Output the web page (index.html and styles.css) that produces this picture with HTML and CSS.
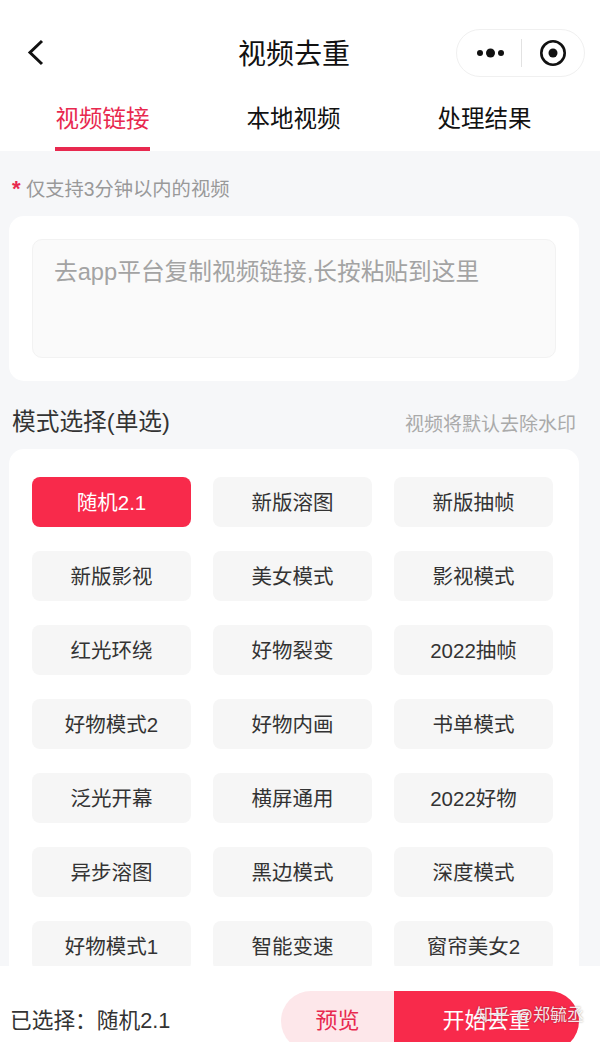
FILE: index.html
```html
<!DOCTYPE html>
<html lang="zh-CN">
<head>
    <meta charset="UTF-8">
    <meta name="viewport" content="width=device-width, initial-scale=1.0">
    <title>视频去重</title>
    <link rel="stylesheet" href="styles.css">
</head>
<body>
    <div class="page">
        <div class="top">
            <div class="navbar">
                <svg class="back" width="24" height="30" viewBox="0 0 24 30">
                    <path d="M18 3 L6 14.5 L18 26" fill="none" stroke="#111" stroke-width="3"/>
                </svg>
                <div class="nav-title">视频去重</div>
                <div class="capsule">
                    <svg width="27" height="12" viewBox="0 0 27 12">
                        <circle cx="3" cy="6" r="3" fill="#111"/>
                        <circle cx="13.5" cy="6" r="4.5" fill="#111"/>
                        <circle cx="24" cy="6" r="3" fill="#111"/>
                    </svg>
                    <div class="capsule-line"></div>
                    <svg width="28" height="28" viewBox="0 0 28 28">
                        <circle cx="14" cy="14" r="11.7" fill="none" stroke="#111" stroke-width="2.6"/>
                        <circle cx="14" cy="14" r="4.5" fill="#111"/>
                    </svg>
                </div>
            </div>
            <div class="tabs">
                <div class="tab active">视频链接</div>
                <div class="tab">本地视频</div>
                <div class="tab">处理结果</div>
            </div>
        </div>

        <div class="content">
            <div class="tip"><span class="star">*</span> 仅支持3分钟以内的视频</div>

            <div class="card link-card">
                <div class="link-box">去app平台复制视频链接,长按粘贴到这里</div>
            </div>

            <div class="section-head">
                <div class="section-title">模式选择(单选)</div>
                <div class="section-note">视频将默认去除水印</div>
            </div>

            <div class="card mode-card">
                <div class="mode selected">随机2.1</div>
                <div class="mode">新版溶图</div>
                <div class="mode">新版抽帧</div>
                <div class="mode">新版影视</div>
                <div class="mode">美女模式</div>
                <div class="mode">影视模式</div>
                <div class="mode">红光环绕</div>
                <div class="mode">好物裂变</div>
                <div class="mode">2022抽帧</div>
                <div class="mode">好物模式2</div>
                <div class="mode">好物内画</div>
                <div class="mode">书单模式</div>
                <div class="mode">泛光开幕</div>
                <div class="mode">横屏通用</div>
                <div class="mode">2022好物</div>
                <div class="mode">异步溶图</div>
                <div class="mode">黑边模式</div>
                <div class="mode">深度模式</div>
                <div class="mode">好物模式1</div>
                <div class="mode">智能变速</div>
                <div class="mode">窗帘美女2</div>
            </div>
        </div>

        <div class="footer">
            <div class="picked">已选择：随机2.1</div>
            <div class="actions">
                <div class="btn-preview">预览</div>
                <div class="btn-start">开始去重</div>
            </div>
        </div>

        <div class="watermark">知乎 @郑毓丞</div>
    </div>
</body>
</html>
```

FILE: styles.css
```css
* {
    box-sizing: border-box;
}
body {
    margin: 0;
    font-family: "Liberation Sans", "Noto Sans CJK SC", sans-serif;
    color: #222;
}
.page {
    position: relative;
    height: 1042px;
    overflow: hidden;
    background: #f6f7f9;
}
.top {
    height: 151px;
    background: white;
    padding-top: 32px;
}
.navbar {
    position: relative;
    height: 44px;
    padding: 0 12px 4px 0;
    display: flex;
    align-items: center;
    justify-content: center;
}
.back {
    position: absolute;
    left: 24px;
    top: 6px;
}
.nav-title {
    font-size: 28px;
    color: #111;
}
.capsule {
    position: absolute;
    left: 456px;
    top: -3px;
    width: 129px;
    height: 48px;
    border: 1px solid #f0f0f0;
    border-radius: 24px;
    display: flex;
    align-items: center;
    padding-left: 20px;
}
.capsule-line {
    width: 1px;
    height: 28px;
    background: #e2e2e2;
    margin: 0 17px;
}
.tabs {
    display: flex;
    justify-content: space-between;
    padding: 0 68px 0 55px;
    margin-top: 21px;
}
.tab {
    width: 95px;
    height: 54px;
    font-size: 23.5px;
    line-height: 44px;
    white-space: nowrap;
    color: #111;
    text-align: center;
}
.tab.active {
    color: #e8294f;
    border-bottom: 4px solid #e8294f;
}
.content {
    padding: 0 21px 0 9px;
}
.tip {
    height: 28px;
    margin-top: 25px;
    padding-left: 3px;
    font-size: 19.3px;
    line-height: 28px;
    color: #999;
}
.star {
    color: #e8294f;
    font-size: 22px;
    font-weight: bold;
    line-height: 20px;
}
.card {
    background: white;
    border-radius: 15px;
}
.link-card {
    margin-top: 12px;
    height: 165px;
    padding: 23px 23px 0;
}
.link-box {
    height: 119px;
    width: 524px;
    padding: 14px 21px;
    background: #fafafa;
    border: 1px solid #f2f2f2;
    border-radius: 10px;
    font-size: 23.7px;
    line-height: 36px;
    color: #a3a3a3;
}
.section-head {
    display: flex;
    justify-content: space-between;
    align-items: center;
    height: 68px;
    padding: 10px 3px 0;
}
.section-title {
    font-size: 23.7px;
    color: #333;
}
.section-note {
    font-size: 19px;
    color: #aaa;
    margin-top: 5px;
}
.mode-card {
    padding: 28px 27px 28px 23px;
    display: grid;
    grid-template-columns: repeat(3, 159px);
    gap: 24px 22px;
}
.mode {
    height: 50px;
    line-height: 51px;
    text-align: center;
    background: #f6f6f6;
    border-radius: 8px;
    font-size: 20.5px;
    color: #333;
    white-space: nowrap;
}
.mode.selected {
    background: #f82a4b;
    color: white;
}
.footer {
    position: absolute;
    left: 0;
    right: 0;
    bottom: 0;
    height: 76px;
    background: white;
    display: flex;
    justify-content: space-between;
    padding: 25px 21px 0 10px;
}
.picked {
    font-size: 21.7px;
    line-height: 60px;
    color: #333;
}
.actions {
    display: flex;
    height: 60px;
    font-size: 22px;
    line-height: 60px;
    text-align: center;
}
.btn-preview {
    width: 113px;
    background: #fde7ea;
    color: #e8294f;
    border-radius: 30px 0 0 30px;
}
.btn-start {
    width: 185px;
    background: #f82a4b;
    color: white;
    border-radius: 0 30px 30px 0;
}
.watermark {
    position: absolute;
    left: 476px;
    top: 1003px;
    font-size: 17px;
    line-height: 26px;
    word-spacing: 1px;
    color: rgba(255, 255, 255, 0.9);
    text-shadow: 0 0 2px rgba(0, 0, 0, 0.4);
    white-space: nowrap;
}
```
